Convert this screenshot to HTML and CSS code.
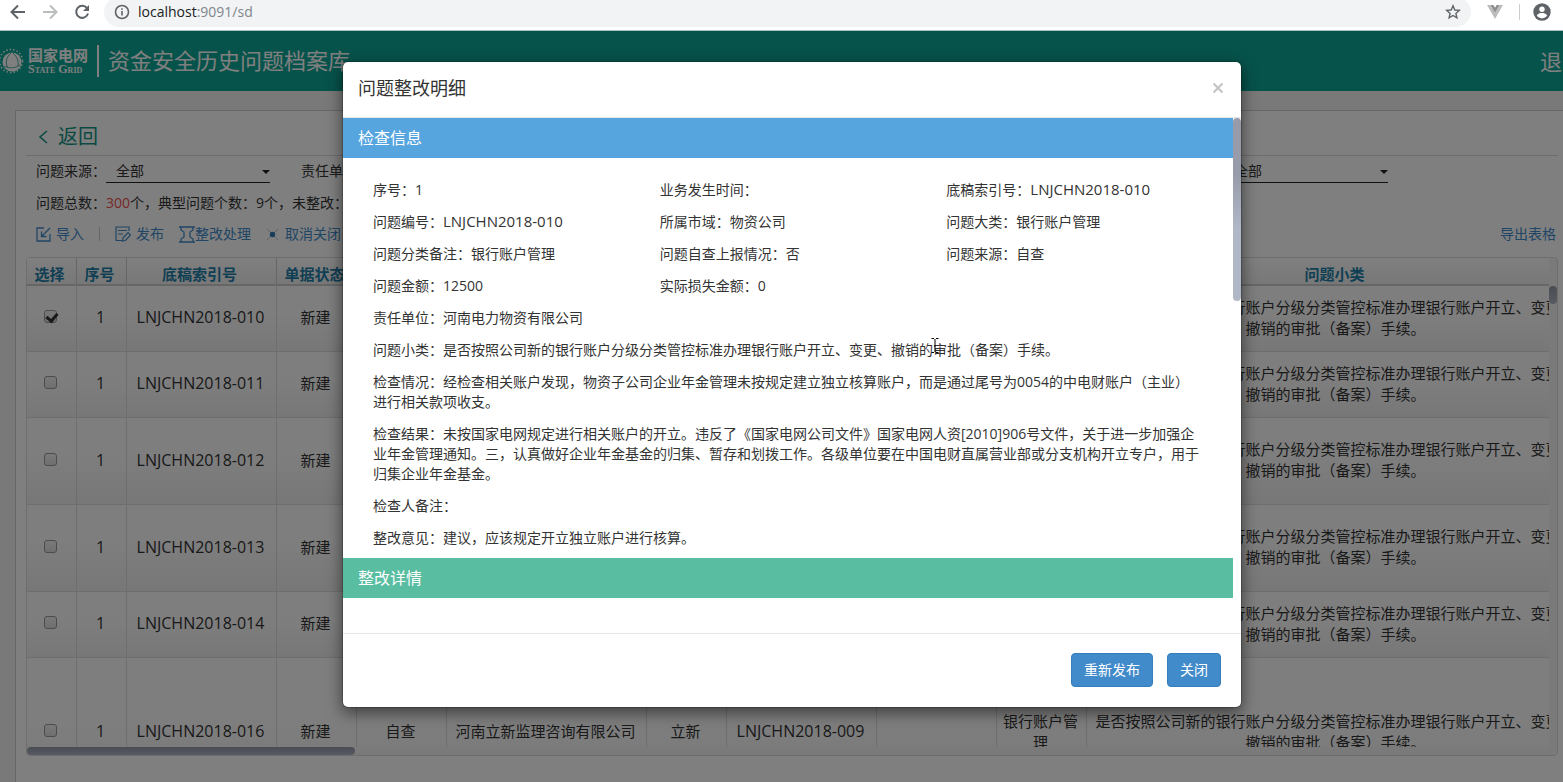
FILE: index.html
```html
<!DOCTYPE html>
<html lang="zh-CN">
<head>
<meta charset="utf-8">
<title>资金安全历史问题档案库</title>
<link rel="stylesheet" href="styles.css">
</head>
<body>
<div class="browser-bar">
  <button class="nav-btn" aria-label="后退"><svg width="16" height="16" viewBox="0 0 16 16" fill="none" stroke="#5f6368" stroke-width="2"><path d="M15 8H2M8 1.500L1.500 8L8 14.500"/></svg></button>
  <button class="nav-btn" aria-label="前进"><svg width="16" height="16" viewBox="0 0 16 16" fill="none" stroke="#babcbe" stroke-width="2"><path d="M1 8H14M8 1.500L14.500 8L8 14.500"/></svg></button>
  <button class="nav-btn" aria-label="刷新"><svg width="16" height="16" viewBox="0 0 16 16" fill="none" stroke="#5f6368" stroke-width="2"><path d="M13 4.200A6 6 0 1 0 14 9.500"/><path d="M15 1V7H9Z" fill="#5f6368" stroke="none"/></svg></button>
  <div class="omnibox">
    <svg width="16" height="16" viewBox="0 0 16 16" fill="none" stroke="#5f6368" stroke-width="1.600"><circle cx="8" cy="8" r="6.500"/><path d="M8 7V11.500M8 4.200V5.800"/></svg>
    <span class="url"><span class="host">localhost</span>:9091/sd</span>
    <svg width="16" height="16" viewBox="0 0 16 16" fill="none" stroke="#5f6368" stroke-width="1.400"><path d="M8 1.800L9.800 6L14.300 6.400L10.900 9.400L11.900 13.900L8 11.500L4.100 13.900L5.100 9.400L1.700 6.400L6.200 6Z"/></svg>
  </div>
  <svg class="vue" width="16" height="14" viewBox="0 0 16 14"><path d="M0 0H3.500L8 8L12.500 0H16L8 14Z" fill="#bdbdbd"/><path d="M3.500 0H6.400L8 2.800L9.600 0H12.500L8 8Z" fill="#8f8f8f"/></svg>
  <span class="bar-sep"></span>
  <svg class="avatar" width="18" height="18" viewBox="0 0 18 18"><circle cx="9" cy="9" r="8.700" fill="#5f6368"/><circle cx="9" cy="6.300" r="2.700" fill="#fff"/><path d="M3.800 12.600C5 10.600 7 10 9 10S13 10.600 14.200 12.600C13 14.400 11 15.400 9 15.400S5 14.400 3.800 12.600Z" fill="#fff"/></svg>
</div>

<div class="app">
  <header class="app-header">
    <svg class="logo" width="24" height="26" viewBox="0 0 24 26" fill="none" stroke="#fff"><circle cx="11" cy="13" r="11.500" stroke-width="1.500" stroke-dasharray="1.500 2"/><circle cx="12" cy="14" r="9.500" fill="#fff" stroke="none"/><path d="M11 5C6 9 5 15 8 20M13 5C17 9 19 13 18 18M4 18C9 21 16 20 20 17" stroke="#4faea4" stroke-width="1"/></svg>
    <div class="brand"><span class="brand-cn">国家电网</span><span class="brand-en">State Grid</span></div>
    <h1 class="app-title">资金安全历史问题档案库</h1>
    <button class="logout">退出</button>
  </header>
  <main class="panel">
    <button class="back"><svg width="10" height="14" viewBox="0 0 10 14" fill="none" stroke="#169384" stroke-width="1.600"><path d="M9 1L2 7L9 13"/></svg>返回</button>
    <div class="filters">
      <div class="filter"><label for="src">问题来源：</label><select id="src"><option>全部</option></select></div>
      <div class="filter"><label for="unit">责任单位：</label><select id="unit"><option>全部</option></select></div>
      <div class="filter last"><label for="state">问题状态：</label><select id="state"><option>全部</option></select></div>
    </div>
    <p class="stats">问题总数：<span class="num">300</span>个，典型问题个数：9个，未整改：</p>
    <div class="tools">
      <button class="tool"><svg width="15" height="15" viewBox="0 0 15 15" fill="none" stroke="#428bca" stroke-width="1.300"><path d="M8 1H1V14H14V7M14 1L6 9M5.500 4.500V9.500H10.500"/></svg>导入</button>
      <span class="tool-sep"></span>
      <button class="tool"><svg width="16" height="16" viewBox="0 0 16 16" fill="none" stroke="#428bca" stroke-width="1.200"><path d="M7 14.500H1V1H14V5M3 4.500H12M3 8H8M8 12L13 6.500L15.500 9L10.500 14.500L7.500 15Z"/></svg>发布</button>
      <button class="tool tight"><svg width="16" height="17" viewBox="0 0 16 17" fill="none" stroke="#428bca" stroke-width="1.300"><path d="M0 1H16M0 16H16M2 1V4L5 6V11L2 13V16M14 1V4L11 6V11L14 13V16"/></svg>整改处理</button>
      <button class="tool last-tool"><svg width="13" height="13" viewBox="0 0 13 13" fill="none" stroke="#b5c5d5" stroke-width="1"><path d="M1 1L12 12M12 1L1 12"/><circle cx="6.500" cy="6.500" r="2.700" fill="#337ab7" stroke="none"/></svg>取消关闭</button>
      <a class="export" href="#">导出表格</a>
    </div>
    <div class="grid-box">
      <div class="grid-main">
        <div class="grid-clip">
          <table class="grid">
            <colgroup><col class="w50"><col class="w50"><col class="w150"><col class="w80"><col class="w90"><col class="w200"><col class="w80"><col class="w150"><col class="w120"><col class="w90"><col class="w500"></colgroup>
            <thead><tr><th>选择</th><th>序号</th><th>底稿索引号</th><th>单据状态</th><th></th><th></th><th></th><th></th><th></th><th></th><th>问题小类</th></tr></thead>
            <tbody>
              <tr class="h66"><td><input type="checkbox" aria-label="选择 010" checked></td><td class="code">1</td><td class="code">LNJCHN2018-010</td><td>新建</td><td></td><td></td><td></td><td></td><td></td><td></td><td>是否按照公司新的银行账户分级分类管控标准办理银行账户开立、变更、撤销的审批（备案）手续。</td></tr>
              <tr class="h66"><td><input type="checkbox" aria-label="选择 011"></td><td class="code">1</td><td class="code">LNJCHN2018-011</td><td>新建</td><td></td><td></td><td></td><td></td><td></td><td></td><td>是否按照公司新的银行账户分级分类管控标准办理银行账户开立、变更、撤销的审批（备案）手续。</td></tr>
              <tr class="h87"><td><input type="checkbox" aria-label="选择 012"></td><td class="code">1</td><td class="code">LNJCHN2018-012</td><td>新建</td><td></td><td></td><td></td><td></td><td></td><td></td><td>是否按照公司新的银行账户分级分类管控标准办理银行账户开立、变更、撤销的审批（备案）手续。</td></tr>
              <tr class="h87"><td><input type="checkbox" aria-label="选择 013"></td><td class="code">1</td><td class="code">LNJCHN2018-013</td><td>新建</td><td></td><td></td><td></td><td></td><td></td><td></td><td>是否按照公司新的银行账户分级分类管控标准办理银行账户开立、变更、撤销的审批（备案）手续。</td></tr>
              <tr class="h66"><td><input type="checkbox" aria-label="选择 014"></td><td class="code">1</td><td class="code">LNJCHN2018-014</td><td>新建</td><td></td><td></td><td></td><td></td><td></td><td></td><td>是否按照公司新的银行账户分级分类管控标准办理银行账户开立、变更、撤销的审批（备案）手续。</td></tr>
              <tr class="h150"><td><input type="checkbox" aria-label="选择 016"></td><td class="code">1</td><td class="code">LNJCHN2018-016</td><td>新建</td><td>自查</td><td>河南立新监理咨询有限公司</td><td>立新</td><td class="code">LNJCHN2018-009</td><td></td><td>银行账户管理</td><td>是否按照公司新的银行账户分级分类管控标准办理银行账户开立、变更、撤销的审批（备案）手续。</td></tr>
            </tbody>
          </table>
        </div>
        <div class="v-track"><div class="v-thumb"></div></div>
      </div>
      <div class="h-track"><div class="h-thumb"></div></div>
    </div>
  </main>

  <div class="backdrop">
    <section class="modal" role="dialog" aria-labelledby="dlg-title">
      <header class="modal-head"><h2 id="dlg-title">问题整改明细</h2><button class="close" aria-label="关闭窗口"><svg width="10" height="10" viewBox="0 0 10 10" stroke="#c4c4c4" stroke-width="2.200"><path d="M0.500 0.500L9.500 9.500M9.500 0.500L0.500 9.500"/></svg></button></header>
      <div class="modal-body">
        <div class="modal-content">
          <h3 class="bar blue">检查信息</h3>
          <div class="details">
            <div class="facts">
              <span>序号：1</span><span>业务发生时间：</span><span>底稿索引号：<span class="id">LNJCHN2018-010</span></span>
              <span>问题编号：<span class="id">LNJCHN2018-010</span></span><span>所属市域：物资公司</span><span>问题大类：银行账户管理</span>
              <span>问题分类备注：银行账户管理</span><span>问题自查上报情况：否</span><span>问题来源：自查</span>
              <span>问题金额：12500</span><span>实际损失金额：0</span>
            </div>
            <p>责任单位：河南电力物资有限公司</p>
            <p>问题小类：是否按照公司新的银行账户分级分类管控标准办理银行账户开立、变更、撤销的审批（备案）手续。</p>
            <p>检查情况：经检查相关账户发现，物资子公司企业年金管理未按规定建立独立核算账户，而是通过尾号为0054的中电财账户（主业）进行相关款项收支。</p>
            <p>检查结果：未按国家电网规定进行相关账户的开立。违反了《国家电网公司文件》国家电网人资[2010]906号文件，关于进一步加强企业年金管理通知。三，认真做好企业年金基金的归集、暂存和划拨工作。各级单位要在中国电财直属营业部或分支机构开立专户，用于归集企业年金基金。</p>
            <p>检查人备注：</p>
            <p>整改意见：建议，应该规定开立独立账户进行核算。</p>
          </div>
          <h3 class="bar green">整改详情</h3>
        </div>
        <div class="m-track"><div class="m-thumb"></div></div>
      </div>
      <footer class="modal-foot"><button class="btn">重新发布</button><button class="btn">关闭</button></footer>
    </section>
  </div>
</div>
<svg class="caret" width="8" height="15" viewBox="0 0 8 15" fill="none" stroke="#000" stroke-width="1"><path d="M0.500 0.500H3M5 0.500H7.500M4 1V14M0.500 14.500H3M5 14.500H7.500"/></svg>
</body>
</html>
```
FILE: styles.css
```css
* { box-sizing: border-box; }
html, body { height: 100%; }
body {
  margin: 0;
  display: flex;
  flex-direction: column;
  overflow: hidden;
  background: #fff;
  color: #333;
  font: 14px/20px "Open Sans", "Noto Sans CJK SC", sans-serif;
}
button { font: inherit; color: inherit; background: none; border: 0; padding: 0; cursor: pointer; }
h1, h2, h3, p { margin: 0; font-weight: 400; }
svg { flex: none; display: block; }

/* browser toolbar */
.browser-bar {
  flex: none;
  height: 31px;
  display: flex;
  align-items: center;
  padding: 0 12px 6px 10px;
  border-bottom: 1px solid #a8c0be;
}
.nav-btn { margin-right: 16px; }
.nav-btn:nth-child(3) { margin-right: 14px; }
.omnibox {
  flex: 1;
  height: 30px;
  display: flex;
  align-items: center;
  gap: 8px;
  padding: 0 10px;
  border-radius: 15px;
  background: #f1f3f4;
}
.url { flex: 1; color: #80868b; }
.host { color: #202124; }
.vue { margin-left: 16px; }
.bar-sep { width: 1px; height: 16px; margin: 0 13px 0 16px; background: #ccc; }

/* application */
.app {
  flex: 1;
  min-height: 0;
  position: relative;
  display: flex;
  flex-direction: column;
  background: #f3f3f3;
}
.app-header {
  flex: none;
  height: 60px;
  display: flex;
  align-items: center;
  background: #0ca696;
  color: #fff;
}
.brand { width: 69px; margin-left: 4px; display: flex; flex-direction: column; }
.brand-cn { font: 700 15px/16px "Noto Sans CJK SC", sans-serif; }
.brand-en { font: 700 12px/12px "Liberation Serif", serif; font-variant: small-caps; white-space: nowrap; }
.app-title { font-size: 22px; line-height: 30px; padding: 0 0 2px 9px; border-left: 2px solid #fff; flex: 1; white-space: nowrap; }
.logout { width: 23px; overflow: hidden; white-space: nowrap; font-size: 22px; line-height: 30px; text-align: left; }

.panel {
  flex: 1;
  min-height: 0;
  display: flex;
  flex-direction: column;
  margin: 19px 0 0 15px;
  padding: 0 5px 26px 10px;
  border: 1px solid #ccc;
  border-right: 0;
  border-bottom: 0;
  background: #fff;
}
.back {
  flex: none;
  height: 45px;
  padding: 8px 0 0 12px;
  display: flex;
  align-items: center;
  gap: 10px;
  border-bottom: 1px solid #ddd;
  color: #169384;
  font-size: 20px;
}
.filters { flex: none; display: flex; padding: 3px 170px 0 10px; }
.filter { position: relative; display: flex; align-items: center; height: 24px; margin-right: 31px; }
.filter.last { margin-left: auto; margin-right: 0; }
.filter select {
  appearance: none;
  width: 164px;
  height: 24px;
  margin: 0;
  padding: 0 10px;
  border: 0;
  border-bottom: 1px solid #222;
  border-radius: 0;
  font: inherit;
  color: inherit;
  background: none;
}
.filter::after {
  content: "";
  position: absolute;
  right: 0;
  top: 11px;
  border: 4px solid transparent;
  border-top-color: #222;
  border-bottom: 0;
}
.stats { flex: none; padding: 10px 10px 0; white-space: nowrap; }
.num { color: #f25050; }
.tools { flex: none; display: flex; align-items: center; height: 44px; padding: 0 2px 2px 10px; color: #428bca; }
.tool { display: flex; align-items: center; gap: 5px; margin-right: 15px; }
.tool.tight { gap: 0; }
.tool.last-tool { gap: 6px; }
.tool-sep { width: 1px; height: 14px; background: #ccc; margin-right: 15px; }
.export { margin-left: auto; color: #428bca; text-decoration: none; }

.grid-box {
  flex: 1;
  min-height: 0;
  display: flex;
  flex-direction: column;
  border: 1px solid #ddd;
  border-radius: 4px;
  background: #f4f4f4;
}
.grid-main { flex: 1; min-height: 0; display: flex; }
.grid-clip { flex: 1; min-width: 0; overflow: hidden; }
.grid { width: 1560px; table-layout: fixed; border-collapse: separate; border-spacing: 0; font-size: 15px; line-height: 21px; text-align: center; }
.w50 { width: 50px; }
.w80 { width: 80px; }
.w90 { width: 90px; }
.w120 { width: 120px; }
.w150 { width: 150px; }
.w200 { width: 200px; }
.w500 { width: 500px; }
.grid th {
  height: 28px;
  padding: 6px 4px 0 0;
  border-right: 1px solid #ccc;
  border-bottom: 2px solid #ccc;
  background: linear-gradient(#fff, #f0f0f0);
  color: #1f7fa8;
  line-height: 20px;
  white-space: nowrap;
}
.grid td { padding: 0 6px 2px 4px; border-right: 1px solid #ddd; border-bottom: 1px solid #ddd; background: linear-gradient(#fdfdfd 40%, #efefef); }
.grid .code { font-size: 16px; }
.h66 { height: 66px; }
.h87 { height: 87px; }
.h150 { height: 150px; }
.grid input {
  appearance: none;
  width: 13px;
  height: 13px;
  margin: 0;
  border: 1px solid #999;
  border-radius: 3px;
  background: linear-gradient(#f4f4f4, #ddd);
}
.grid input:checked::after {
  content: "";
  display: block;
  width: 5px;
  height: 8px;
  margin: 0 0 0 3px;
  border: solid #333;
  border-width: 0 3px 3px 0;
  transform: rotate(40deg);
}
.v-track { width: 8px; padding-top: 28px; }
.v-thumb { height: 18px; border-radius: 4px; background: linear-gradient(#9499a8, #b0b6c4); }
.h-track { flex: none; height: 8px; }
.h-thumb { width: 328px; height: 8px; border-radius: 4px; background: linear-gradient(#9499a8, #b0b6c4); }

/* dialog */
.backdrop {
  position: absolute;
  inset: 0;
  display: flex;
  justify-content: center;
  align-items: flex-start;
  padding: 30px 0 0 21px;
  background: rgba(0, 0, 0, .5);
}
.modal {
  width: 900px;
  display: flex;
  flex-direction: column;
  border: 1px solid rgba(0, 0, 0, .2);
  border-radius: 6px;
  background: #fff;
  background-clip: padding-box;
  box-shadow: 0 5px 15px rgba(0, 0, 0, .5);
}
.modal-head { display: flex; align-items: center; justify-content: space-between; height: 56px; padding: 0 18px 3px 15px; border-bottom: 1px solid #e5e5e5; }
.modal-head h2 { font-size: 18px; line-height: 26px; }
.modal-body { display: flex; height: calc(100vh - 267px); overflow: hidden; }
.modal-content { flex: 1; min-width: 0; }
.bar { height: 40px; padding: 0 15px; font-size: 16px; line-height: 40px; color: #fff; }
.blue { background: #56a5de; }
.green { background: #58bda1; }
.details { display: flex; flex-direction: column; gap: 12px; padding: 22px 0 10px 30px; }
.details p { padding-right: 30px; }
.facts { display: grid; grid-template-columns: repeat(3, 1fr); grid-auto-rows: 20px; row-gap: 12px; }
.id { font-size: 15px; line-height: 18px; }
.m-track { width: 8px; }
.m-thumb { height: 183px; border-radius: 4px; background: linear-gradient(#979baa 30%, #b0b7c6 60%); }
.modal-foot { display: flex; justify-content: flex-end; gap: 14px; padding: 19px 20px 20px; border-top: 1px solid #e5e5e5; }
.btn { height: 34px; padding: 0 12px; border: 1px solid #357ebd; border-radius: 4px; background: #428bca; color: #fff; }

.caret { position: absolute; left: 931px; top: 338px; }
```
